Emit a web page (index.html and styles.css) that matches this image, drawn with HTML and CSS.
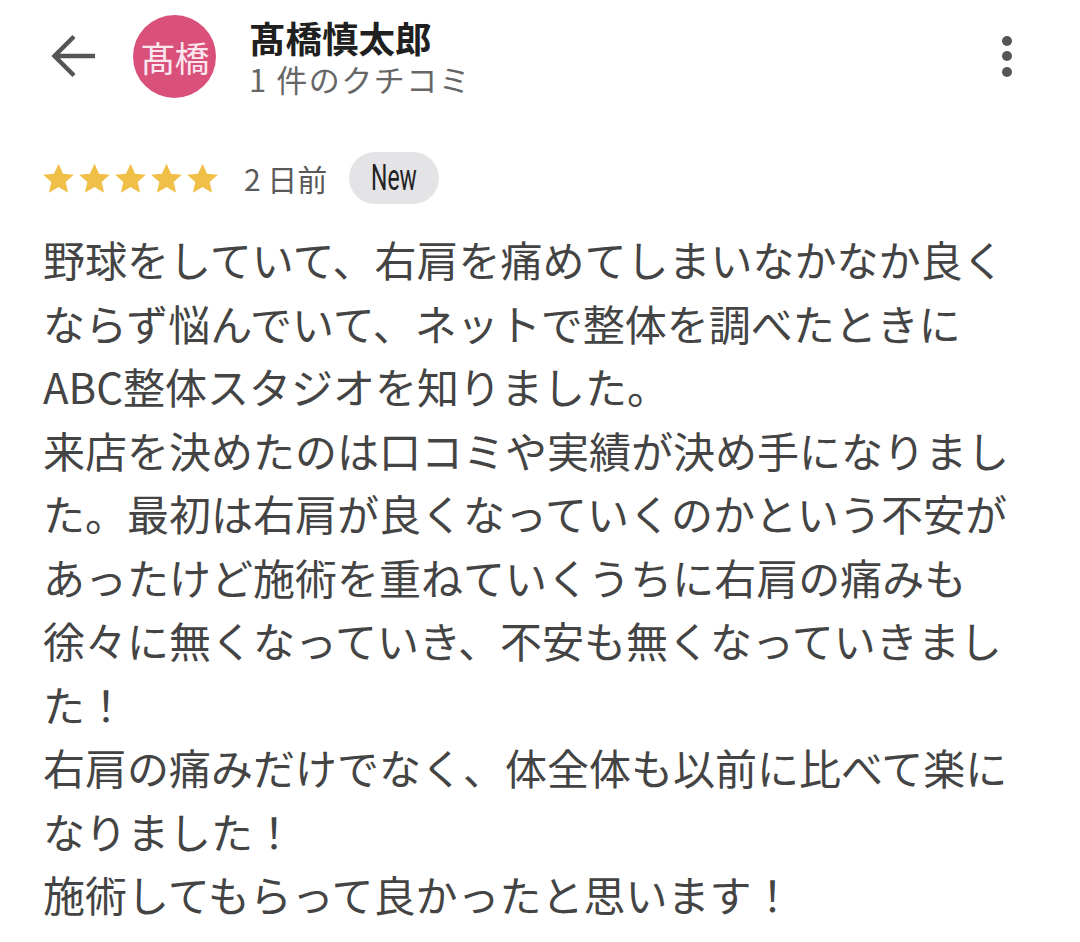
FILE: index.html
```html
<!DOCTYPE html>
<html lang="ja">
<head>
<meta charset="utf-8">
<link rel="stylesheet" href="styles.css">
</head>
<body>
<div class="page">
  <header class="header">
    <svg class="back" width="46" height="46" viewBox="0 0 46 46" aria-hidden="true">
      <path d="M44 23H5" fill="none" stroke="#555" stroke-width="4.5"/>
      <path d="M23 3.5L3.5 23L23 42.5" fill="none" stroke="#555" stroke-width="4.5"/>
    </svg>
    <div class="avatar">髙橋</div>
    <div class="who">
      <div class="name">髙橋慎太郎</div>
      <div class="count">1 件のクチコミ</div>
    </div>
    <div class="more" aria-hidden="true">
      <span class="dot"></span><span class="dot"></span><span class="dot"></span>
    </div>
  </header>

  <div class="meta">
    <div class="stars">
      <svg class="star" viewBox="0 0 24 24"><path d="M12 1.8l3.1 6.9 7.4.7-5.6 5 1.7 7.4L12 17.9l-6.6 3.9 1.7-7.4-5.6-5 7.4-.7z"/></svg>
      <svg class="star" viewBox="0 0 24 24"><path d="M12 1.8l3.1 6.9 7.4.7-5.6 5 1.7 7.4L12 17.9l-6.6 3.9 1.7-7.4-5.6-5 7.4-.7z"/></svg>
      <svg class="star" viewBox="0 0 24 24"><path d="M12 1.8l3.1 6.9 7.4.7-5.6 5 1.7 7.4L12 17.9l-6.6 3.9 1.7-7.4-5.6-5 7.4-.7z"/></svg>
      <svg class="star" viewBox="0 0 24 24"><path d="M12 1.8l3.1 6.9 7.4.7-5.6 5 1.7 7.4L12 17.9l-6.6 3.9 1.7-7.4-5.6-5 7.4-.7z"/></svg>
      <svg class="star" viewBox="0 0 24 24"><path d="M12 1.8l3.1 6.9 7.4.7-5.6 5 1.7 7.4L12 17.9l-6.6 3.9 1.7-7.4-5.6-5 7.4-.7z"/></svg>
    </div>
    <span class="date">2 日前</span>
    <span class="chip"><span class="chip-text">New</span></span>
  </div>

  <div class="review">
    <div class="line">野球をしていて、右肩を痛めてしまいなかなか良く</div>
    <div class="line">ならず悩んでいて、ネットで整体を調べたときに</div>
    <div class="line">ABC整体スタジオを知りました。</div>
    <div class="line">来店を決めたのは口コミや実績が決め手になりまし</div>
    <div class="line">た。最初は右肩が良くなっていくのかという不安が</div>
    <div class="line">あったけど施術を重ねていくうちに右肩の痛みも</div>
    <div class="line">徐々に無くなっていき、不安も無くなっていきまし</div>
    <div class="line">た！</div>
    <div class="line">右肩の痛みだけでなく、体全体も以前に比べて楽に</div>
    <div class="line">なりました！</div>
    <div class="line">施術してもらって良かったと思います！</div>
  </div>
</div>
</body>
</html>
```

FILE: styles.css
```css
html, body {
  margin: 0;
  padding: 0;
  background: #ffffff;
}

body {
  font-family: "Noto Sans CJK JP", "Noto Sans", sans-serif;
  width: 1080px;
  height: 942px;
  overflow: hidden;
}

.page {
  display: flex;
  flex-direction: column;
}

.header {
  height: 112px;
  display: flex;
  align-items: center;
  padding-left: 51px;
  padding-right: 68px;
}

.back {
  flex: none;
  display: block;
}

.avatar {
  flex: none;
  width: 83px;
  height: 83px;
  margin-left: 36px;
  border-radius: 50%;
  background: #d9507a;
  color: #fbe6ee;
  font-size: 35px;
  line-height: 83px;
  text-align: center;
  letter-spacing: -1px;
}

.who {
  margin-left: 33px;
  display: flex;
  flex-direction: column;
  flex: 1;
  margin-top: 2px;
}

.name {
  font-size: 36.5px;
  font-weight: 700;
  color: #202020;
  line-height: 44px;
}

.count {
  font-size: 31px;
  color: #666666;
  line-height: 38px;
  letter-spacing: 1.5px;
}

.more {
  display: flex;
  flex-direction: column;
  align-items: center;
  gap: 5.5px;
}

.dot {
  display: block;
  width: 10px;
  height: 10px;
  border-radius: 50%;
  background: #555555;
}

.meta {
  display: flex;
  align-items: center;
  height: 52px;
  margin-top: 40px;
  padding-left: 41px;
}

.stars {
  display: flex;
  gap: 1px;
}

.star {
  width: 35px;
  height: 35px;
  display: block;
  fill: #f0bf47;
}

.date {
  margin-left: 24px;
  font-size: 30px;
  color: #5a5a5a;
  line-height: 52px;
}

.chip {
  margin-left: 22px;
  width: 90px;
  height: 52px;
  border-radius: 26px;
  background: #e4e4e6;
  display: flex;
  align-items: center;
  justify-content: center;
}

.chip-text {
  display: inline-block;
  font-family: "Roboto", "Liberation Sans", sans-serif;
  font-size: 37px;
  line-height: 52px;
  color: #222222;
  transform: scaleX(0.62);
}

.review {
  margin-top: 23px;
  padding-left: 43px;
  font-size: 42px;
  line-height: 63.5px;
  color: #444444;
  white-space: nowrap;
}

.line {
  height: 63.5px;
}
```
